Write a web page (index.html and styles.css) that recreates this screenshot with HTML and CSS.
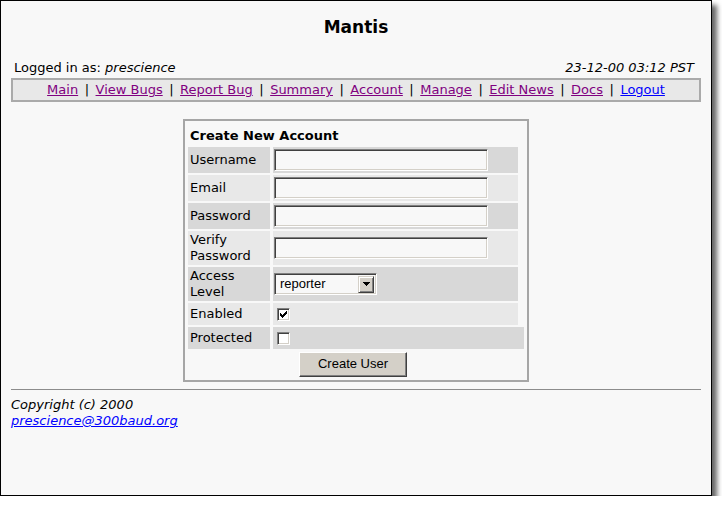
FILE: index.html
```html
<!DOCTYPE html>
<html>
<head>
<meta charset="utf-8">
<title>Mantis - Create New Account</title>
<link rel="stylesheet" href="styles.css">
</head>
<body>
<div class="window">
  <h1 class="title">Mantis</h1>
  <div class="info">
    <span>Logged in as: <i>prescience</i></span>
    <i>23-12-00 03:12 PST</i>
  </div>
  <nav class="menu"><a class="seen" href="#">Main</a><span class="sep">|</span><a class="seen" href="#">View Bugs</a><span class="sep">|</span><a class="seen" href="#">Report Bug</a><span class="sep">|</span><a class="seen" href="#">Summary</a><span class="sep">|</span><a class="seen" href="#">Account</a><span class="sep">|</span><a class="seen" href="#">Manage</a><span class="sep">|</span><a class="seen" href="#">Edit News</a><span class="sep">|</span><a class="seen" href="#">Docs</a><span class="sep">|</span><a class="fresh" href="#">Logout</a></nav>
  <form class="account">
    <div class="form-title">Create New Account</div>
    <div class="row dark h26"><div class="label">Username</div><div class="value"><span class="textbox"></span></div></div>
    <div class="row light h26"><div class="label">Email</div><div class="value"><span class="textbox"></span></div></div>
    <div class="row dark h26"><div class="label">Password</div><div class="value"><span class="textbox"></span></div></div>
    <div class="row light h34"><div class="label">Verify Password</div><div class="value"><span class="textbox"></span></div></div>
    <div class="row dark h34"><div class="label">Access Level</div><div class="value"><span class="select"><span class="select-text">reporter</span><span class="select-btn"><svg width="7" height="4" viewBox="0 0 7 4" shape-rendering="crispEdges"><path d="M0 0h7v1h-7z M1 1h5v1h-5z M2 2h3v1h-3z M3 3h1v1h-1z" fill="#000"/></svg></span></span></div></div>
    <div class="row light h22"><div class="label">Enabled</div><div class="value cb"><span class="check"><svg width="7" height="7" viewBox="0 0 7 7" shape-rendering="crispEdges"><path d="M0 2h1v3h-1z M1 3h1v3h-1z M2 4h1v3h-1z M3 3h1v3h-1z M4 2h1v3h-1z M5 1h1v3h-1z M6 0h1v3h-1z" fill="#000"/></svg></span></div></div>
    <div class="row dark h22"><div class="label">Protected</div><div class="value cb wide"><span class="check"></span></div></div>
    <div class="submit-row"><span class="button">Create User</span></div>
  </form>
  <div class="rule"></div>
  <footer class="footer">
    <i>Copyright (c) 2000</i><br>
    <a class="mail" href="#"><i>prescience@300baud.org</i></a>
  </footer>
</div>
</body>
</html>
```
FILE: styles.css
```css
html, body {
  margin: 0;
  padding: 0;
  background: #ffffff;
}
body {
  font-family: "DejaVu Sans", Verdana, sans-serif;
  font-size: 13px;
  line-height: 16px;
  color: #000;
}
.window {
  box-sizing: border-box;
  width: 712px;
  height: 496px;
  border: 1px solid #000;
  background: #f8f8f8;
  box-shadow: 5px 5px 5px rgba(0, 0, 0, 0.6);
  padding: 16px 10px 0;
}
.title {
  margin: 0;
  font-size: 17px;
  line-height: 20px;
  font-weight: bold;
  text-align: center;
}
.info {
  display: flex;
  justify-content: space-between;
  margin-top: 23px;
  padding: 0 7px 0 3px;
}
.menu {
  margin-top: 2px;
  border: 2px solid #aaaaaa;
  background: #e8e8e8;
  text-align: center;
  padding: 2px 0;
}
.menu a.seen { color: #800080; }
.menu a.fresh { color: #0000ff; }
.menu .sep { padding: 0 6.5px; }
.account {
  width: 336px;
  margin: 17px auto 0;
  border: 2px solid #a6a6a6;
  padding: 1px 3px 3px;
  display: flex;
  flex-direction: column;
  gap: 2px;
}
.form-title {
  box-sizing: border-box;
  height: 23px;
  padding: 6px 2px 0;
  font-weight: bold;
}
.row {
  display: flex;
  gap: 3px;
}
.h26 { height: 26px; }
.h34 { height: 34px; }
.h22 { height: 22px; }
.label {
  box-sizing: border-box;
  width: 82px;
  padding: 0 2px;
  display: flex;
  align-items: center;
}
.value {
  box-sizing: border-box;
  width: 245px;
  padding-left: 1px;
  display: flex;
  align-items: center;
}
.value.cb { padding-left: 4px; }
.value.wide { width: 251px; }
.dark > div { background: #d8d8d8; }
.light > div { background: #e8e8e8; }
.textbox, .select, .check {
  box-sizing: border-box;
  display: block;
  border: 1px solid;
  border-color: #808080 #ffffff #ffffff #808080;
  box-shadow: inset 1px 1px 0 #404040, inset -1px -1px 0 #d4d0c8;
}
.textbox {
  width: 214px;
  height: 22px;
  background: #f8f8f8;
}
.select {
  width: 103px;
  height: 22px;
  background: #f8f8f8;
  display: flex;
  align-items: center;
  justify-content: space-between;
  padding: 2px;
  font-family: "Liberation Sans", Arial, sans-serif;
  font-size: 13px;
}
.select-text { padding-left: 3px; }
.select-btn {
  box-sizing: border-box;
  width: 16px;
  height: 17px;
  background: #d4d0c8;
  border: 1px solid;
  border-color: #d4d0c8 #404040 #404040 #d4d0c8;
  box-shadow: inset 1px 1px 0 #ffffff, inset -1px -1px 0 #808080;
  display: flex;
  align-items: center;
  justify-content: center;
}
.check {
  width: 13px;
  height: 13px;
  background: #ffffff;
  display: flex;
  align-items: center;
  justify-content: center;
}
.submit-row {
  width: 330px;
  height: 26px;
  display: flex;
  justify-content: center;
  align-items: center;
}
.button {
  box-sizing: border-box;
  width: 108px;
  height: 25px;
  background: #d4d0c8;
  border: 1px solid;
  border-color: #ffffff #404040 #404040 #ffffff;
  box-shadow: inset -1px -1px 0 #808080;
  font-family: "Liberation Sans", Arial, sans-serif;
  font-size: 13px;
  display: flex;
  align-items: center;
  justify-content: center;
}
.rule {
  margin-top: 7px;
  border-top: 1px solid #8c8c8c;
}
.footer {
  margin-top: 7px;
}
.footer .mail { color: #0000ff; }
```
